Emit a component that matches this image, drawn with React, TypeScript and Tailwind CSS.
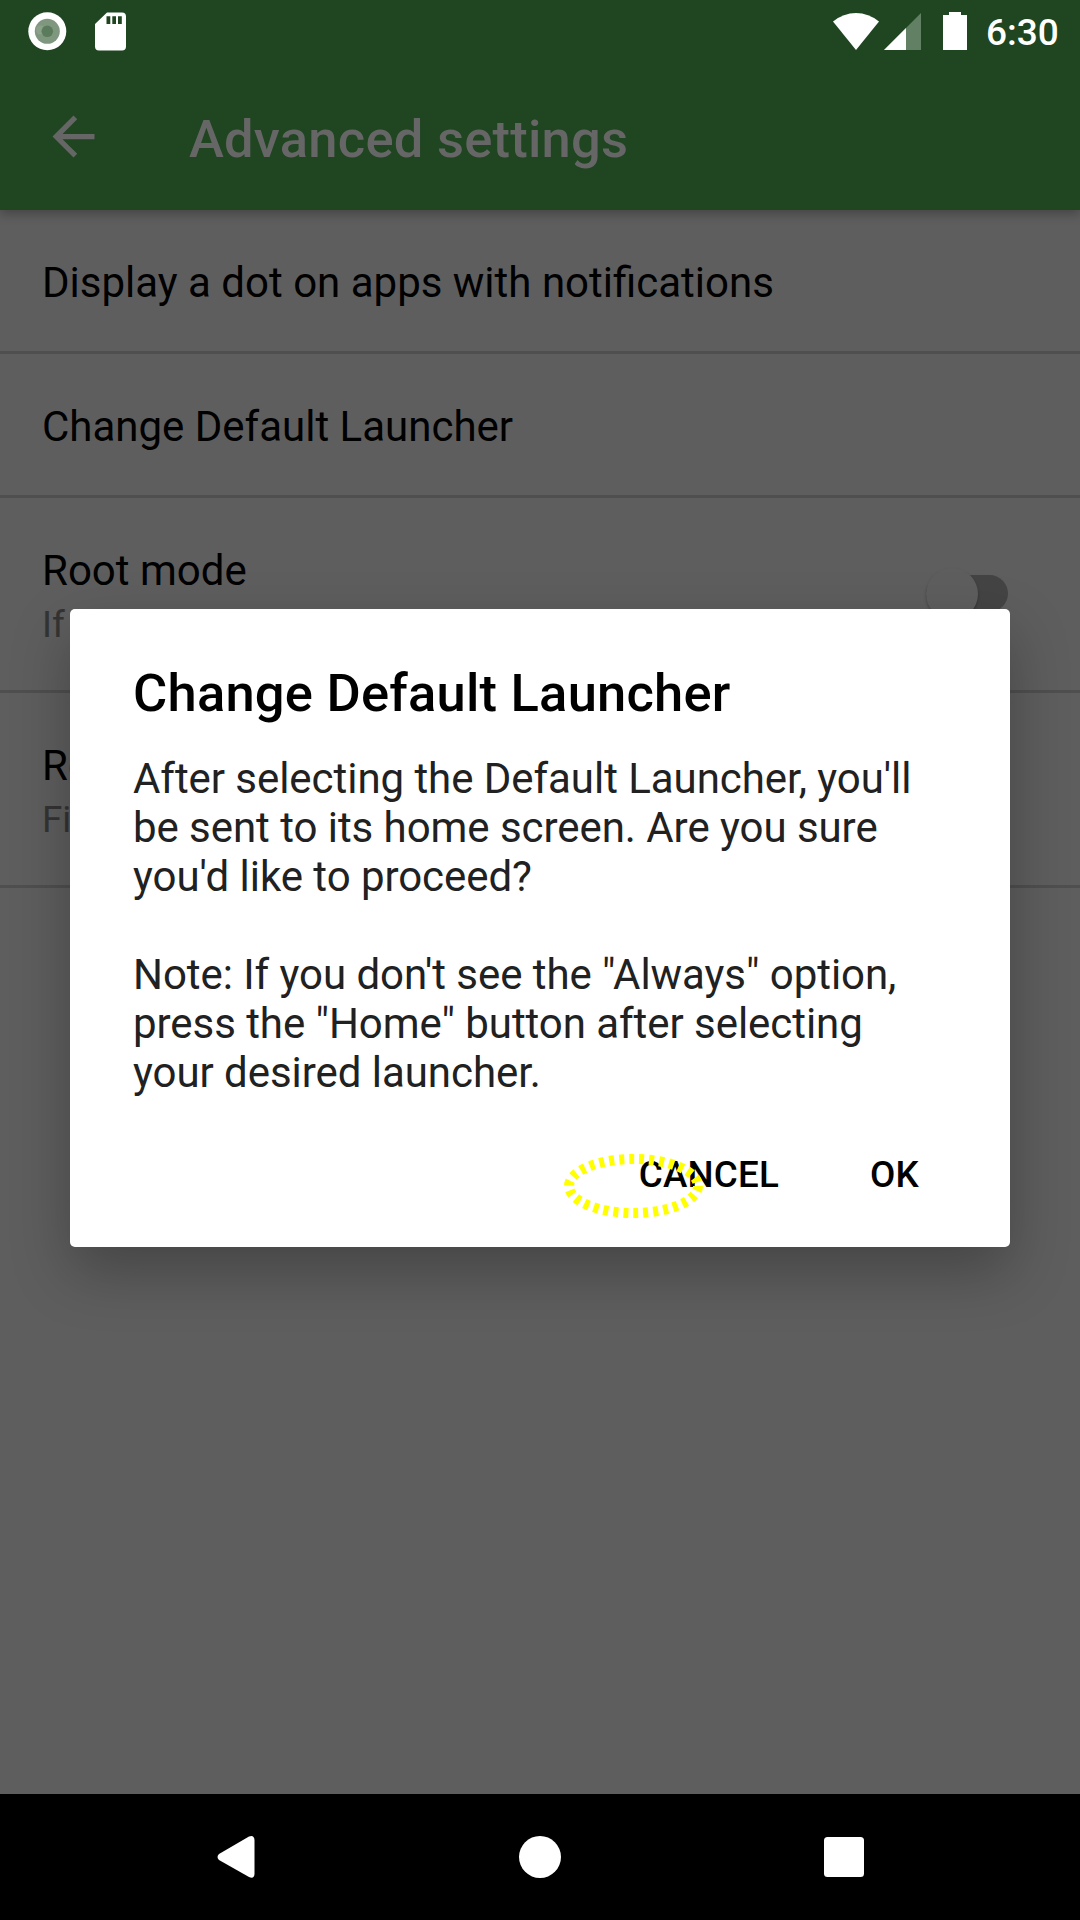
import React from "react";

function StatusBar() {
  return (
    <div className="flex h-[63px] shrink-0 justify-between">
      <svg width="140" height="63" viewBox="0 0 140 63">
        <circle cx="47.3" cy="31.3" r="19" fill="#fff" />
        <circle cx="47.3" cy="31.3" r="12.5" fill="#7f977f" />
        <circle cx="40.5" cy="30" r="4.5" fill="#8ba18a" />
        <circle cx="47.3" cy="31.3" r="5.8" fill="#5b7c5c" />
        <path
          fillRule="evenodd"
          fill="#fff"
          d="M107 12.5H122Q126 12.5 126 16.5V46.5Q126 50.5 122 50.5H99Q95 50.5 95 46.5V24ZM106.5 16.3V24H110.3V16.3ZM112.3 16.3V24H116V16.3ZM118 16.3V24H121.8V16.3Z"
        />
      </svg>
      <div className="flex">
        <svg width="150" height="63" viewBox="830 0 150 63">
          <path fill="#fff" d="M833 21.5Q843.5 13 856 13T879 21.5L856 50Z" />
          <path fill="#628164" d="M921 13V50H884Z" />
          <path fill="#fff" d="M906 28V50H884Z" />
          <path fill="#fff" d="M949 12H961V15H967V50H943V15H949Z" />
        </svg>
        <span className="mt-[11px] h-[44px] w-[100px] pl-[6px] text-[37px] leading-[44px] font-medium text-white">6:30</span>
      </div>
    </div>
  );
}

function Row({ title, summary, toggle }: { title: string; summary?: string; toggle?: boolean }) {
  return (
    <div
      className={
        summary
          ? "flex h-[195px] items-start justify-between border-b-[3px] border-[#4f4f4f] pt-[48px] pl-[42px]"
          : "flex h-[144px] items-start border-b-[3px] border-[#4f4f4f] pt-[48px] pl-[42px]"
      }
    >
      <div>
        <div className="text-[42px] leading-[49px] text-black">{title}</div>
        {summary && <div className="mt-[8px] text-[36.75px] leading-[43px] text-[#343434]">{summary}</div>}
      </div>
      {toggle && (
        <div className="mt-[29px] mr-[72px] flex h-[37px] w-[82px] items-center rounded-full bg-[#444444]">
          <div className="size-[52px] shrink-0 rounded-full bg-[#5e5e5e] shadow-[0_2px_3px_rgba(0,0,0,0.25)]" />
        </div>
      )}
    </div>
  );
}

function Dialog() {
  return (
    <div className="absolute top-[609px] left-[70px] flex h-[638px] w-[940px] flex-col rounded-[5px] bg-white pt-[53px] pl-[63px] shadow-[0_24px_58px_rgba(0,0,0,0.27)]">
      <h2 className="text-[52.5px] leading-[62px] font-medium tracking-[0.22px] whitespace-nowrap text-black">Change Default Launcher</h2>
      <p className="mt-[30px] text-[42px] leading-[49px] tracking-[-0.05px] whitespace-nowrap text-[#212121]">
        After selecting the Default Launcher, you'll
        <br />
        be sent to its home screen. Are you sure
        <br />
        you'd like to proceed?
        <br />
        <br />
        Note: If you don't see the "Always" option,
        <br />
        press the "Home" button after selecting
        <br />
        your desired launcher.
      </p>
      <div className="mt-[56px] flex justify-end pr-[91px] text-[36.75px] leading-[43px] font-medium tracking-[0.2px] text-black">
        <button className="mr-[91px]">CANCEL</button>
        <button>OK</button>
      </div>
      <svg className="absolute top-[541px] left-[490px]" width="148" height="72" viewBox="560 1150 148 72">
        <ellipse cx="633.5" cy="1186" rx="64.5" ry="27" fill="none" stroke="#ffff00" strokeWidth="10" strokeDasharray="5 5" />
      </svg>
    </div>
  );
}

export default function App() {
  return (
    <div className="relative flex h-[1920px] w-[1080px] flex-col overflow-hidden bg-[#5e5e5e] font-[Roboto,sans-serif]">
      <header className="relative h-[210px] shrink-0 bg-[#1f4521] shadow-[0_4px_10px_rgba(0,0,0,0.27)]">
        <StatusBar />
        <div className="flex h-[147px] items-center">
          <svg className="ml-[42px]" width="63" height="63" viewBox="0 0 24 24">
            <path fill="#666" d="M20 11H7.83l5.59-5.59L12 4l-8 8 8 8 1.41-1.41L7.83 13H20z" />
          </svg>
          <h1 className="mt-[4px] ml-[84px] text-[52.5px] leading-[62px] font-medium tracking-[0.24px] text-[#666]">Advanced settings</h1>
        </div>
      </header>
      <main className="flex-1">
        <Row title="Display a dot on apps with notifications" />
        <Row title="Change Default Launcher" />
        <Row title="Root mode" summary="If" toggle />
        <Row title="Re" summary="Fi" />
      </main>
      <nav className="flex h-[126px] shrink-0 items-center bg-black">
        <svg width="1080" height="126" viewBox="0 0 1080 126" fill="#fff">
          <path d="M219 60L249 42.500Q254 40.500 254.500 46V80Q254 85.500 249 83L219 66Q216 63 219 60Z" />
          <circle cx="540" cy="63" r="21" />
          <rect x="824" y="43" width="40" height="40" rx="3.500" />
        </svg>
      </nav>
      <Dialog />
    </div>
  );
}
